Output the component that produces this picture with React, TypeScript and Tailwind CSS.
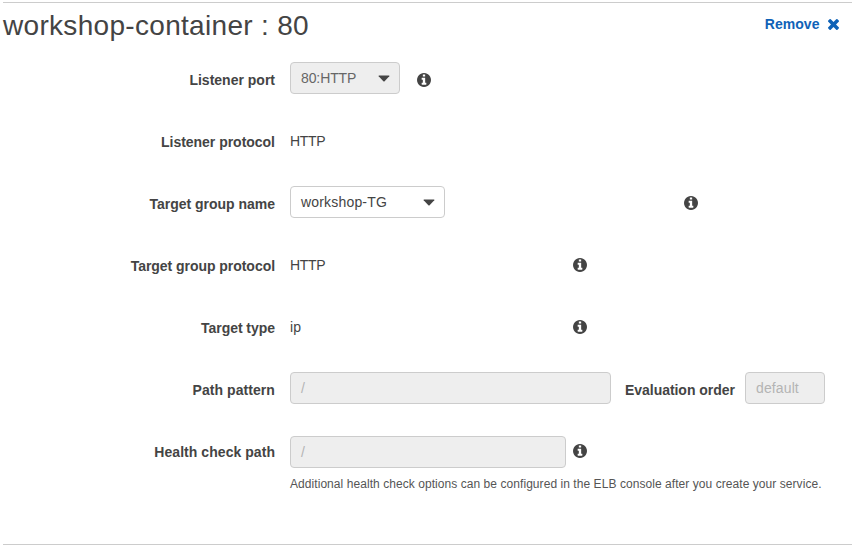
import type { ReactNode } from "react";

function InfoIcon({ className = "" }: { className?: string }) {
  return (
    <svg viewBox="128 128 1536 1536" fill="#444" className={`size-[14px] shrink-0 ${className}`}>
      <path d="M1152 1376v-160q0-14-9-23t-23-9h-96v-512q0-14-9-23t-23-9h-320q-14 0-23 9t-9 23v160q0 14 9 23t23 9h96v320h-96q-14 0-23 9t-9 23v160q0 14 9 23t23 9h448q14 0 23-9t9-23zm-128-896v-160q0-14-9-23t-23-9h-192q-14 0-23 9t-9 23v160q0 14 9 23t23 9h192q14 0 23-9t9-23zm640 416q0 209-103 385.5t-279.5 279.5-385.5 103-385.5-103-279.5-279.5-103-385.5 103-385.5 279.5-279.5 385.5-103 385.5 103 279.5 279.5 103 385.5z" />
    </svg>
  );
}

function RemoveIcon() {
  return (
    <svg viewBox="302 366 1188 1188" fill="#0f62b7" className="size-[11px] shrink-0">
      <path d="M1490 1322q0 40-28 68l-136 136q-28 28-68 28t-68-28l-294-294-294 294q-28 28-68 28t-68-28l-136-136q-28-28-28-68t28-68l294-294-294-294q-28-28-28-68t28-68l136-136q28-28 68-28t68 28l294 294 294-294q28-28 68-28t68 28l136 136q28 28 28 68t-28 68l-294 294 294 294q28 28 28 68z" />
    </svg>
  );
}

function Caret() {
  return (
    <svg viewBox="0 0 12 7" fill="#444" className="h-[7px] w-3 shrink-0">
      <path d="M1.1 .5h9.8q.9.100.4.800L6.600 6.300q-.6.4-1.2 0L.7 1.300Q.2.600 1.100.5z" />
    </svg>
  );
}

function Row({ label, tracking, children }: { label: string; tracking: string; children: ReactNode }) {
  return (
    <div className="flex h-[62px] items-start">
      <div className={`w-[275px] shrink-0 pt-[2px] text-right font-bold leading-8 ${tracking}`}>{label}</div>
      <div className="ml-[15px] flex items-start">{children}</div>
    </div>
  );
}

const field = "flex h-8 items-center rounded-[4px] border border-[#ccc]";

export default function App() {
  return (
    <div className="h-[548px] w-[852px] overflow-hidden bg-white pt-[2px] font-['Liberation_Sans',Arial,sans-serif] text-[14px] text-[#444]">
      <div className="ml-[3px] flex h-[60px] items-start justify-between border-t border-[#ccc]">
        <h1 className="pt-[5px] text-[28px] leading-9 tracking-[0.31px]">workshop-container : 80</h1>
        <button className="mr-[13.5px] flex items-center gap-2 pt-[11px] font-bold leading-5 text-[#0f62b7]">
          <span className="tracking-[0.05px]">Remove</span>
          <RemoveIcon />
        </button>
      </div>

      <Row label="Listener port" tracking="">
        <div className={`${field} w-[110px] justify-between bg-[#eee] pr-[9px] pl-[10px] text-[#666]`}>
          <span className="tracking-[-0.1px]">80:HTTP</span>
          <Caret />
        </div>
        <InfoIcon className="mt-[11px] ml-[17px]" />
      </Row>
      <Row label="Listener protocol" tracking="tracking-[-0.02px]">
        <span className="pt-px leading-8 tracking-[-0.3px]">HTTP</span>
      </Row>
      <Row label="Target group name" tracking="tracking-[-0.02px]">
        <div className={`${field} w-[155px] justify-between bg-white pr-[9px] pl-[10px]`}>
          <span className="tracking-[0.18px]">workshop-TG</span>
          <Caret />
        </div>
        <InfoIcon className="mt-[10px] ml-[239px]" />
      </Row>
      <Row label="Target group protocol" tracking="tracking-[-0.04px]">
        <span className="w-[283px] pt-px leading-8 tracking-[-0.3px]">HTTP</span>
        <InfoIcon className="mt-[10px]" />
      </Row>
      <Row label="Target type" tracking="tracking-[-0.04px]">
        <span className="w-[283px] pt-px leading-8 tracking-[0.2px]">ip</span>
        <InfoIcon className="mt-[10px]" />
      </Row>
      <Row label="Path pattern" tracking="tracking-[0.07px]">
        <div className={`${field} w-[321px] bg-[#eee] pl-[10px] text-[#b4b4b4]`}>/</div>
        <span className="ml-[14px] w-[111px] pt-[2px] font-bold leading-8 tracking-[-0.04px]">Evaluation order</span>
        <div className={`${field} ml-[9px] w-[80px] bg-[#eee] pl-[10px] tracking-[0.12px] text-[#b4b4b4]`}>default</div>
      </Row>
      <Row label="Health check path" tracking="tracking-[0.05px]">
        <div>
          <div className="flex pt-[2px]">
            <div className={`${field} w-[276px] bg-[#eee] pl-[10px] text-[#b4b4b4]`}>/</div>
            <InfoIcon className="mt-[8px] ml-[7px]" />
          </div>
          <p className="mt-[7px] whitespace-nowrap text-[12px] leading-[18px] tracking-[0.06px] text-[#555]">
            Additional health check options can be configured in the ELB console after you create your service.
          </p>
        </div>
      </Row>
      <div className="mt-[48px] ml-[3px] border-t border-[#ccc]" />
    </div>
  );
}
